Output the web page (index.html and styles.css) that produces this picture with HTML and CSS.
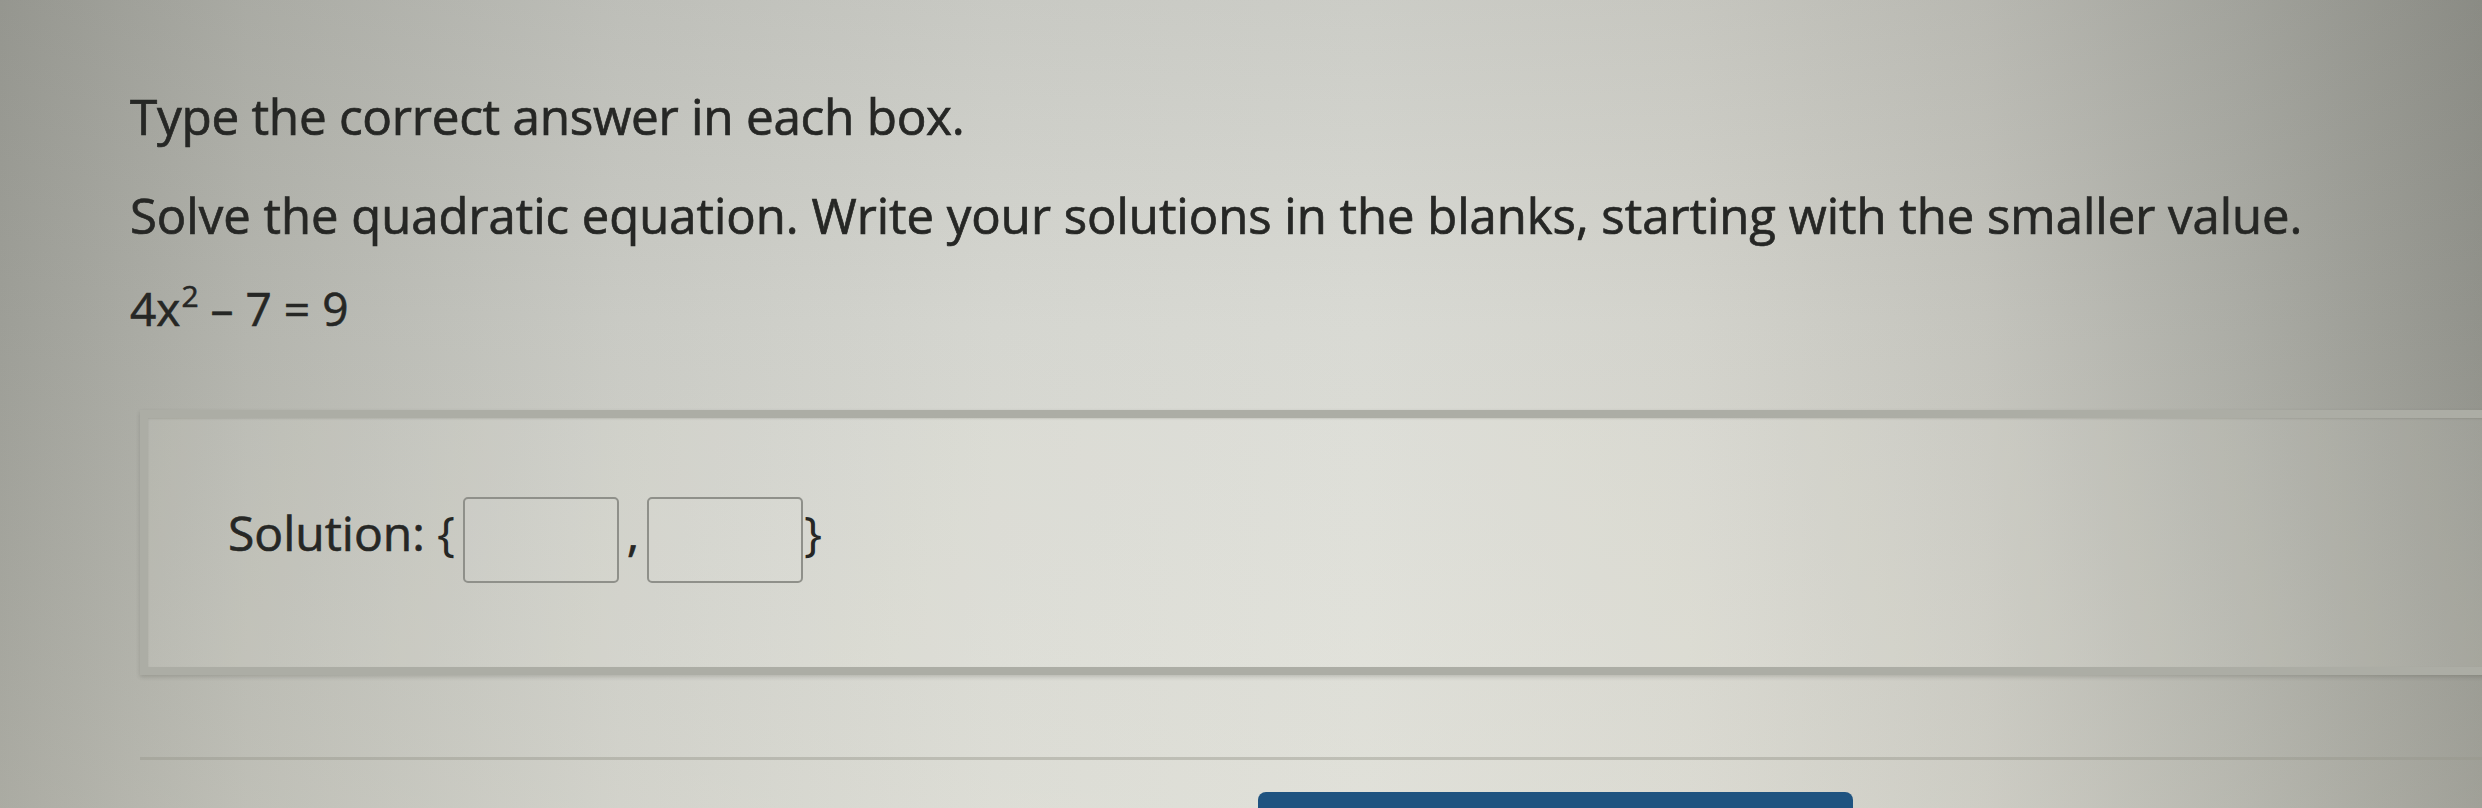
FILE: index.html
```html
<!DOCTYPE html>
<html lang="en">
<head>
<meta charset="utf-8">
<title>Quadratic equation</title>
<link rel="stylesheet" href="styles.css">
</head>
<body>
<div class="page">
  <p class="directions">Type the correct answer in each box.</p>
  <p class="prompt">Solve the quadratic equation. Write your solutions in the blanks, starting with the smaller value.</p>
  <p class="equation">4<i class="var">x</i><sup>2</sup><span class="op">–</span>7<span class="op">=</span>9</p>

  <div class="card">
    <div class="solution-row">
      <span class="label">Solution:</span>
      <span class="brace brace-open">{</span>
      <span class="answer-box" aria-label="first solution"></span>
      <span class="comma">,</span>
      <span class="answer-box" aria-label="second solution"></span>
      <span class="brace brace-close">}</span>
    </div>
  </div>

  <div class="footer-panel">
    <div class="submit-btn"></div>
  </div>
</div>
</body>
</html>
```

FILE: styles.css
```css
html, body {
  margin: 0;
  padding: 0;
  width: 2482px;
  height: 808px;
  overflow: hidden;
}

body {
  font-family: "Open Sans", "Noto Sans", "Liberation Sans", sans-serif;
  color: #262725;
  background:
    linear-gradient(to bottom, rgba(60, 60, 55, 0.10) 0%, rgba(60, 60, 55, 0.02) 40%, rgba(255, 250, 232, 0.12) 100%),
    linear-gradient(to right,
      #9fa099 0%,
      #b6b7b0 10%,
      #cccdc7 25%,
      #d8d9d3 40%,
      #dcddd7 55%,
      #d6d6cf 68%,
      #c6c6bf 80%,
      #aeafa8 90%,
      #93948d 100%);
}

.page {
  padding-left: 130px;
  padding-top: 83px;
}

.directions,
.prompt {
  margin: 0;
  font-size: 49.5px;
  line-height: 67px;
  white-space: nowrap;
  letter-spacing: -0.3px;
  -webkit-text-stroke: 0.7px #262725;
}

.prompt {
  margin-top: 32px;
  font-size: 49px;
  letter-spacing: 0;
}

.equation {
  margin: 31px 0 0;
  font-size: 46px;
  line-height: 57px;
  white-space: nowrap;
  -webkit-text-stroke: 0.6px #262725;
}

.equation .var {
  font-style: normal;
}

.equation sup {
  font-size: 30px;
  line-height: 0;
  vertical-align: baseline;
  position: relative;
  top: -19px;
  margin-left: 1px;
}

.equation .op {
  margin: 0 12px;
}

.card {
  margin-top: 73px;
  margin-left: 10px;
  margin-right: -40px;
  border: 8px solid #acada5;
  border-right: none;
  box-shadow: 0 2px 4px rgba(40, 40, 35, 0.18), inset 0 1px 2px rgba(40, 40, 35, 0.12);
  background: rgba(255, 255, 250, 0.10);
  padding: 79px 0 84px 80px;
}

.solution-row {
  display: flex;
  align-items: flex-start;
  font-size: 48px;
  line-height: 65px;
  -webkit-text-stroke: 0.6px #262725;
}

.label {
  margin-top: 3px;
}

.brace {
  margin-top: 3px;
  -webkit-text-stroke: 0;
}

.brace-open {
  margin-left: 12px;
  margin-right: 8px;
}

.brace-close {
  margin-left: 1px;
}

.answer-box {
  width: 152px;
  height: 82px;
  border: 2px solid #8f908a;
  border-radius: 5px;
  background: rgba(255, 255, 255, 0.05);
}

.comma {
  margin-top: 3px;
  width: 28px;
  text-align: center;
}

.footer-panel {
  margin-top: 82px;
  margin-left: 10px;
  margin-right: -40px;
  border-top: 3px solid rgba(150, 150, 140, 0.45);
  padding-top: 32px;
  padding-left: 1118px;
}

.submit-btn {
  width: 595px;
  height: 16px;
  background: #1f5380;
  border-radius: 8px 8px 0 0;
}
```
